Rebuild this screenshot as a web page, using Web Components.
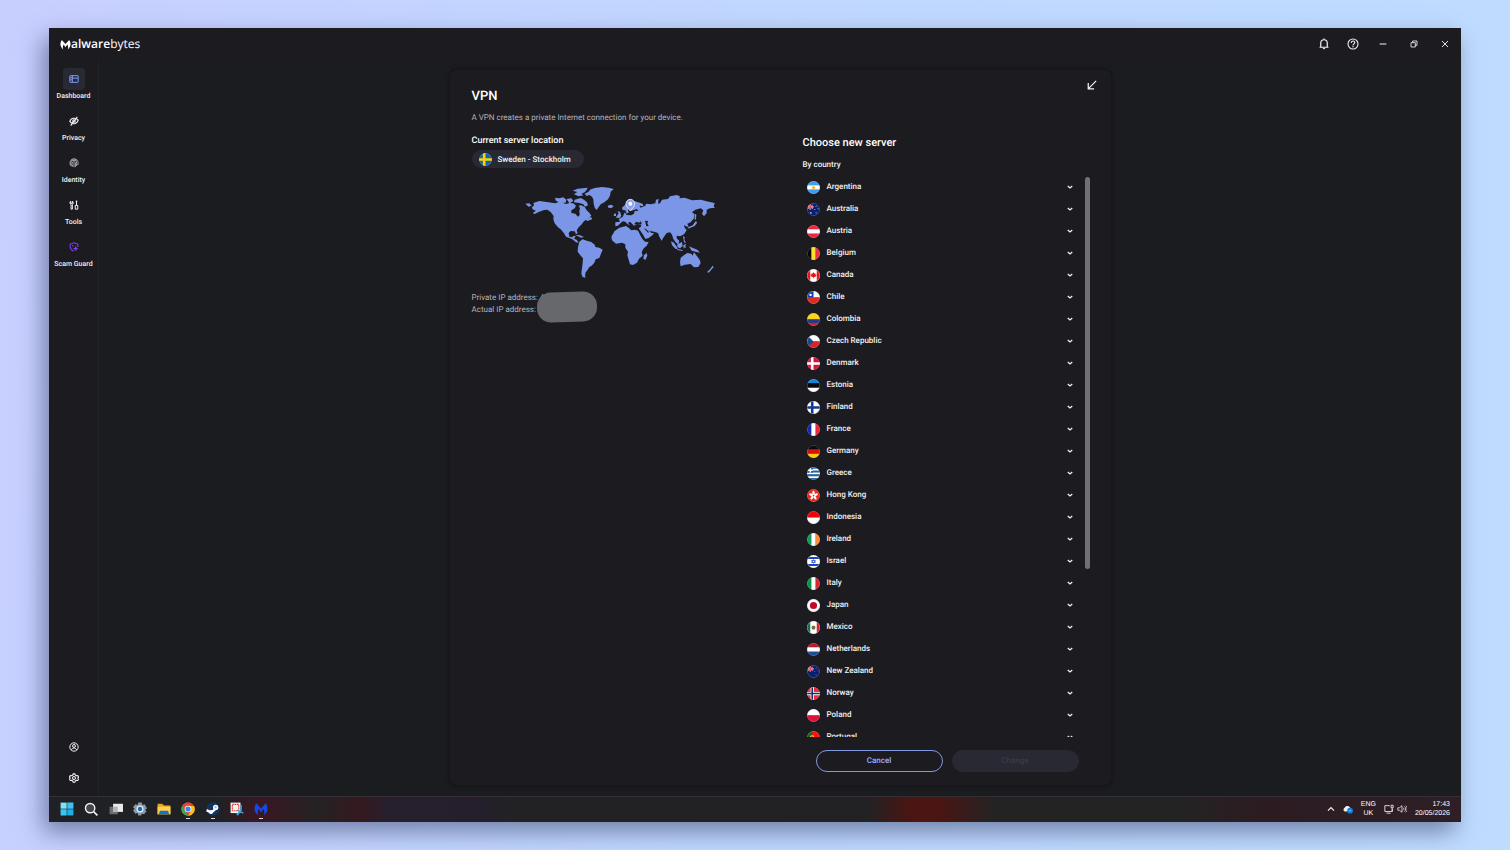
<!DOCTYPE html>
<html lang="en">
<head>
<meta charset="utf-8">
<title>Malwarebytes VPN</title>
<style>
  html, body { height: 100%; }
  body {
    margin: 0;
    box-sizing: border-box;
    padding: 28px 49px;
    background: linear-gradient(100deg, #c8cfff, #c0d8ff 50%, #bfdcff);
    font-family: Roboto, "Liberation Sans", sans-serif;
    text-rendering: geometricPrecision;
    color: #f2f2f4;
  }
</style>
</head>
<body>
<desktop-window>
  <title-bar slot="title"></title-bar>
  <side-nav slot="nav">
    <nav-item icon="dashboard" active>Dashboard</nav-item>
    <nav-item icon="privacy">Privacy</nav-item>
    <nav-item icon="identity">Identity</nav-item>
    <nav-item icon="tools">Tools</nav-item>
    <nav-item icon="scam">Scam Guard</nav-item>
    <nav-item slot="bottom" icon="account" label="Account"></nav-item>
    <nav-item slot="bottom" icon="settings" label="Settings"></nav-item>
  </side-nav>
  <vpn-card>
    <server-location slot="current"></server-location>
    <server-picker slot="picker"></server-picker>
  </vpn-card>
  <task-bar slot="taskbar"></task-bar>
</desktop-window>

<script>
const ICONS = {
  dashboard: '<g fill="none" stroke="#7f98f5" stroke-width="2.4"><rect x="2" y="4" width="20" height="16" rx="1"/><path d="M8 4v16M8 10h14M2 9h6M2 14h6"/></g>',
  privacy: '<g fill="none" stroke="#f2f2f4" stroke-width="2.6"><path d="M2 13C5 4 17 3 22 10c-3 10-14 12-20 3zM20 2L4 23"/><circle cx="12" cy="12" r="3"/></g>',
  identity: '<g fill="none" stroke="#b4b4b8" stroke-width="2.2"><path d="M4 18C0 9 5 2 12 2s12 6 9 15M6 20C2 11 7 5 12 5s8 5 6 14M9 21C6 14 7 9 12 9s4 6 3 13M12 12v10M5 5l14 0"/></g>',
  tools: '<g fill="none" stroke="#f2f2f4" stroke-width="2.4"><path d="M5 22V11C1 9 2 4 4 3v5h4V3c3 2 3 6 0 8v11zM18 2v10M16 3h4M15 13h6v9h-6z"/></g>',
  scam: '<path d="M12 2l9 3v7M12 2L3 5v7c0 5 4 8 8 10" fill="none" stroke="#7a3df0" stroke-width="2.6"/><path d="M16 9l2 5 5 2-5 2-2 5-2-5-5-2 5-2z" fill="#8a35ff"/><circle cx="9" cy="9" r="2" fill="#8a35ff"/>',
  account: '<g fill="none" stroke="#f2f2f4" stroke-width="2.4"><circle cx="12" cy="12" r="10"/><circle cx="12" cy="9.5" r="3.5"/><path d="M6 19c1-6 11-6 12 0"/></g>',
  settings: '<g fill="none" stroke="#f2f2f4" stroke-width="2.6"><path d="M10 2h4l1 3 3 1.500 3-.5 2 4-2 2 2 3-2 3-3-.5-3 1.500-1 3h-4l-1-3-3-1.500-3 .5-2-3 2-3-2-2 2-4 3 .5L9 5z"/><circle cx="12" cy="12" r="3.500"/></g>',
  bell: '<path d="M3 18.500h18M5.500 18v-8a6.500 6.500 0 0 1 13 0v8M12 1v3" fill="none" stroke="#f2f2f4" stroke-width="2.400"/><path d="M9 20h6l-3 3z" fill="#f2f2f4"/>',
  help: '<circle cx="12" cy="12" r="10" fill="none" stroke="#f2f2f4" stroke-width="2.200"/><path d="M8.500 10c0-5 7-5 7-1 0 3-3.500 2.500-3.500 6" fill="none" stroke="#f2f2f4" stroke-width="2.200"/><circle cx="12" cy="17.500" r="1.300" fill="#f2f2f4"/>',
  minimize: '<path d="M2 12h20" stroke="#f2f2f4" stroke-width="3"/>',
  restore: '<path d="M3 8h13v13H3zM8 8V3h13v13h-5" fill="none" stroke="#e0e0e2" stroke-width="2.800"/>',
  close: '<path d="M3 3l18 18M21 3L3 21" stroke="#f2f2f4" stroke-width="2.800"/>',
  collapse: '<path d="M22 2L4 20M3 7v14h14" fill="none" stroke="#f2f2f4" stroke-width="3"/>',
  chevron: '<path d="M3 8l9 8 9-8" fill="none" stroke="#f2f2f4" stroke-width="5"/>',
  up: '<path d="M3 17l9-9 9 9" fill="none" stroke="#f2f2f4" stroke-width="3.500"/>',
  brand: '<path d="M4 2l8 9 8-9c5 7 4 15-3 21 1-3 1-6 0-9l-1-2-4 6-4-6-1 2c-1 3-1 6 0 9C0 17-1 9 4 2z" fill="currentColor"/>',
  windows: '<g fill="#39c5f4"><path d="M1 1h10.500v10.500H1z" fill="#7be3fb"/><path d="M12.500 1H23v10.500H12.500zM1 12.500h10.500V23H1z"/><path d="M12.500 12.500H23V23H12.500z" fill="#20aee8"/></g>',
  search: '<circle cx="10.500" cy="10.500" r="8" fill="#44464a" stroke="#f2f2f4" stroke-width="2.400"/><path d="M16.500 16.500L23 23" stroke="#f2f2f4" stroke-width="2.800"/>',
  taskview: '<path d="M1 8h14v13H1z" fill="#6d6d70"/><path d="M7 3h17v14H7z" fill="#e9e9eb"/><path d="M7 8h8v9H7z" fill="#b4b4b7"/>',
  gear: '<path d="M9 1h6l1 4 4-1 4 7-3 2 2 3-4 5-4-1-1 3h-5l-1-4-4 1-4-6 3-2-3-3 4-5 4 1z" fill="#8a98a8"/><circle cx="12" cy="12" r="6" fill="#e6edf5"/><circle cx="12" cy="12" r="3.800" fill="#1768b8"/>',
  folder: '<path d="M1 3h8l3 3h11v15H1z" fill="#e9a51d"/><path d="M1 8h22v13H1z" fill="#ffd04f"/><path d="M5 15h14l2 6H3z" fill="#1672c4"/>',
  chrome: '<circle cx="12" cy="12" r="11.500" fill="#e94235"/><path d="M2 6.500l5.500 9L12 23.500A11.500 11.500 0 0 1 2 6.500z" fill="#34a853"/><path d="M12 7h10.500A11.500 11.500 0 0 1 12 23.500l5-8.500z" fill="#fbc116"/><circle cx="12" cy="12" r="5.700" fill="#fff"/><circle cx="12" cy="12" r="4.400" fill="#3d7fee"/>',
  steam: '<circle cx="12" cy="12" r="11.500" fill="#12325f"/><path d="M1 14l8 4 6-5 5-3" fill="none" stroke="#fff" stroke-width="4"/><circle cx="16.500" cy="9" r="4.500" fill="#fff"/><circle cx="16.500" cy="9" r="2" fill="#9db6d8"/><circle cx="8.500" cy="17" r="3.500" fill="#fff"/>',
  snip: '<path d="M1 1h17v18H1z" fill="#f7f4f4"/><path d="M4 4h11v11H4z" fill="none" stroke="#e0413a" stroke-width="2" stroke-dasharray="3 1"/><path d="M19 5v9l-6 7M12 14l11 5" fill="none" stroke="#3ba3dc" stroke-width="2.500"/><circle cx="13" cy="21" r="2" fill="#3ba3dc"/>',
  cloud: '<path d="M4 18a5 5 0 0 1 0-9c2-6 11-6 13 0 7 2 5 9 1 9z" fill="#eceef2"/><circle cx="17" cy="16" r="7" fill="#117ddd"/><path d="M14 16h6" stroke="#8cc9ff" stroke-width="2"/>',
  monitor: '<path d="M14 4H2v14h18v-6M6 22h10M17 3h5v6h-5zM19.500 9v9" fill="none" stroke="#e6e0e2" stroke-width="2.200"/>',
  speaker: '<path d="M2 9h4l6-5v16l-6-5H2zM15 9c2 2 2 4 0 6M18 6c4 4 4 8 0 12M21 4c5 5 5 11 0 16" fill="none" stroke="#e6e0e2" stroke-width="2"/>'
};

// Flags are drawn on a 20x20 square and clipped to a circle by <country-flag>.
const rows = (...c) => c.map((f, i) => `<path fill="${f}" d="M0 ${i * 20 / c.length}h20v${20 / c.length + .1}H0z"/>`).join('');
const cols = (...c) => c.map((f, i) => `<path fill="${f}" d="M${i * 20 / c.length} 0h${20 / c.length + .1}v20H${i * 20 / c.length}z"/>`).join('');
const cross = (bg, outer, inner) => `<path fill="${bg}" d="M0 0h20v20H0z"/><path d="M8 0v20M0 10h20" stroke="${outer}" stroke-width="${inner ? 5 : 4}"/>` +
  (inner ? `<path d="M8 0v20M0 10h20" stroke="${inner}" stroke-width="2.400"/>` : '');
const jack = '<path fill="#06206e" d="M0 0h20v20H0z"/><path d="M1 3l8 6M9 3L1 9" stroke="#e8d5e2" stroke-width="1.200"/><path d="M5 2v8M1 6h9" stroke="#f4d3dc" stroke-width="2.400"/><path d="M5 2v8M1 6h9" stroke="#e2334b" stroke-width="1.600"/>';

const FLAGS = {
  Sweden: cross('#1560ad', '#ffd400'),
  Argentina: rows('#3f9df0', '#fff', '#3f9df0') + '<circle cx="10" cy="10" r="2.500" fill="#f8b91c"/>',
  Australia: jack + '<g fill="#cfd5ec"><circle cx="6" cy="15" r="1.300"/><circle cx="14" cy="5" r=".8"/><circle cx="17" cy="9" r=".8"/><circle cx="12" cy="10" r=".8"/><circle cx="14" cy="15" r=".8"/></g>',
  Austria: rows('#f0263f', '#fff', '#f0263f'),
  Belgium: cols('#080808', '#ffdf2e', '#ee2f3f'),
  Canada: '<path fill="#fff" d="M0 0h20v20H0z"/><path fill="#e8161c" d="M0 0h5v20H0zM15 0h5v20h-5zM10 5l1.500 2 1.500-.5v2l2 .5-2 3-2.500.5v2h-1v-2L7 12l-2-3 2-.5v-2l1.500.5z"/>',
  Chile: '<path fill="#fff" d="M0 0h20v10H0z"/><path fill="#dd2b22" d="M0 10h20v10H0z"/><path fill="#0c3fb5" d="M0 0h10v10H0z"/><circle cx="5.500" cy="6" r="1.800" fill="#fff"/>',
  Colombia: '<path fill="#ffd21c" d="M0 0h20v10H0z"/><path fill="#173e9c" d="M0 10h20v5H0z"/><path fill="#d31f30" d="M0 15h20v5H0z"/>',
  'Czech Republic': rows('#fff', '#dc2127') + '<path fill="#17498c" d="M0 0l10 10L0 20z"/>',
  Denmark: cross('#d8113a', '#fff'),
  Estonia: rows('#1384d8', '#0a0a0c', '#fff'),
  Finland: cross('#fff', '#133a90'),
  France: cols('#1528a8', '#fff', '#ee2438'),
  Germany: rows('#0b0b0c', '#dd0d10', '#ffce0a'),
  Greece: rows('#1769bd', '#fff', '#1769bd', '#fff', '#1769bd', '#fff', '#1769bd') + '<path fill="#1769bd" d="M0 0h9v9H0z"/><path d="M5 0v9M0 5h9" stroke="#fff" stroke-width="2"/>',
  'Hong Kong': '<path fill="#e5291b" d="M0 0h20v20H0z"/><g fill="#fff">' + [0, 72, 144, 216, 288].map(a => `<ellipse cx="10" cy="6" rx="1.900" ry="3.200" transform="rotate(${a} 10 10)"/>`).join('') + '</g>',
  Indonesia: rows('#f4000c', '#fff'),
  Ireland: cols('#129b55', '#fff', '#ff8b3c'),
  Israel: '<path fill="#fff" d="M0 0h20v20H0z"/><path fill="#1c45bd" d="M0 3h20v3H0zM0 14h20v3H0z"/><path d="M10 7l3 4.500H7zM10 13L7 8.500h6z" fill="none" stroke="#1c45bd"/>',
  Italy: cols('#0c9246', '#fff', '#d82637'),
  Japan: '<path fill="#fff" d="M0 0h20v20H0z"/><circle cx="10" cy="10" r="5.500" fill="#c4052d"/>',
  Mexico: '<path fill="#fff" d="M0 0h20v20H0z"/><path fill="#0c7147" d="M0 0h5v20H0z"/><path fill="#d4202f" d="M15 0h5v20h-5z"/><circle cx="10" cy="10" r="3" fill="#8b6b38"/><path d="M8 12h4" stroke="#317f4b" stroke-width="1.500"/>',
  Netherlands: rows('#b51d2c', '#fff', '#1e4a94'),
  'New Zealand': jack + '<g fill="#a05590"><circle cx="14" cy="5" r=".9"/><circle cx="17" cy="9" r=".9"/><circle cx="12" cy="10" r=".9"/><circle cx="14" cy="15" r=".9"/></g>',
  Norway: cross('#ee2b38', '#fff', '#12306f'),
  Poland: rows('#fff', '#df1139'),
  Portugal: '<path fill="#ff1010" d="M0 0h20v20H0z"/><path fill="#0c6b1e" d="M0 0h8v20H0z"/><circle cx="8" cy="10" r="3.500" fill="#ffdf2e"/><circle cx="8" cy="10" r="2" fill="#ff1010"/>'
};

class BaseElement extends HTMLElement {
  constructor() {
    super();
    this.attachShadow({ mode: 'open' });
  }

  connectedCallback() {
    this.shadowRoot.innerHTML = this.render();
  }
}

customElements.define('svg-icon', class extends BaseElement {
  render() {
    const size = this.getAttribute('size') || 10;
    return `
      <style>
        :host { display: inline-flex; flex: none; }
        svg { display: block; }
      </style>
      <svg viewBox="0 0 24 24" width="${size}" height="${size}" aria-hidden="true">${ICONS[this.getAttribute('name')]}</svg>
    `;
  }
});

customElements.define('country-flag', class extends BaseElement {
  render() {
    return `
      <style>
        :host { display: block; flex: none; box-sizing: border-box; width: 13px; height: 13px; border-radius: 50%; overflow: hidden; }
        svg { display: block; width: 100%; height: 100%; }
      </style>
      <svg viewBox="0 0 20 20" aria-hidden="true">
        ${FLAGS[this.getAttribute('country')]}
        <circle cx="10" cy="10" r="9.500" fill="none" stroke="#c8c8d0" stroke-opacity=".5"/>
      </svg>
    `;
  }
});

customElements.define('desktop-window', class extends BaseElement {
  render() {
    return `
      <style>
        :host {
          display: grid;
          grid-template: 32px minmax(0, 1fr) 26px / 50px minmax(0, 1fr);
          height: 100%;
          background: #1b1c20;
          box-shadow: -6px 10px 22px rgba(50, 60, 100, .55);
        }
        ::slotted([slot="title"]), ::slotted([slot="taskbar"]) { grid-column: 1 / -1; }
        main { display: flex; justify-content: center; min-height: 0; padding: 9px 16px 10px; }
      </style>
      <slot name="title"></slot>
      <slot name="nav"></slot>
      <main><slot></slot></main>
      <slot name="taskbar"></slot>
    `;
  }
});

customElements.define('title-bar', class extends BaseElement {
  render() {
    const button = (name, label, size) =>
      `<button aria-label="${label}"><svg-icon name="${name}" size="${size}"></svg-icon></button>`;
    return `
      <style>
        :host { display: flex; justify-content: space-between; align-items: center; padding: 0 1px 0 11px; background: #1c1b20; }
        .brand { display: flex; align-items: center; font: 12px/16px "Open Sans", sans-serif; color: #fff; }
        .brand b { font-weight: 600; }
        .buttons, .actions { display: flex; }
        button { display: grid; place-items: center; width: 31px; height: 32px; padding: 0; border: 0; background: none; }
        .actions button { width: 29px; }
      </style>
      <div class="brand"><svg-icon name="brand" size="11" role="img" aria-label="M"></svg-icon><span><b>alware</b>bytes</span></div>
      <div class="buttons">
        <div class="actions">${button('bell', 'Notifications', 12)}${button('help', 'Help', 12)}</div>
        ${button('minimize', 'Minimize', 8)}${button('restore', 'Restore', 8)}${button('close', 'Close', 8)}
      </div>
    `;
  }
});

customElements.define('side-nav', class extends BaseElement {
  render() {
    return `
      <style>
        :host { display: block; background: #1c1b20; border-right: 1px solid #222226; }
        nav { display: flex; flex-direction: column; justify-content: space-between; height: 100%; box-sizing: border-box; padding: 8px 0 7px; }
        div { display: grid; gap: 8px; }
        .bottom { gap: 9px; }
      </style>
      <nav aria-label="Main">
        <div><slot></slot></div>
        <div class="bottom"><slot name="bottom"></slot></div>
      </nav>
    `;
  }
});

customElements.define('nav-item', class extends BaseElement {
  render() {
    const label = this.getAttribute('label');
    return `
      <style>
        :host { display: block; }
        a { display: grid; justify-items: center; color: #f2f2f4; text-decoration: none; font-size: 7px; font-weight: 500; line-height: 12px; white-space: nowrap; }
        .icon { display: grid; place-items: center; width: 22px; height: 22px; border-radius: 4px; }
        :host([active]) .icon { background: #282a33; }
      </style>
      <a href="#" ${label ? `aria-label="${label}"` : ''}>
        <span class="icon"><svg-icon name="${this.getAttribute('icon')}" size="10"></svg-icon></span>
        ${label ? '' : '<span><slot></slot></span>'}
      </a>
    `;
  }
});

customElements.define('vpn-card', class extends BaseElement {
  render() {
    return `
      <style>
        :host {
          display: flex;
          flex-direction: column;
          box-sizing: border-box;
          width: 100%;
          max-width: 663px;
          padding: 9px 21px 13px 22px;
          border: 1px solid #17171b;
          border-radius: 8px;
          background: #1c1b20;
          box-shadow: 0 0 4px rgba(0, 0, 0, .35);
        }
        header { display: flex; justify-content: space-between; align-items: start; }
        h1 { margin: 9px 0 0; font-size: 13px; font-weight: 500; line-height: 18px; color: #fff; }
        button { display: grid; padding: 0; border: 0; margin-right: -8px; background: none; width: 12px; height: 12px; place-items: center; }
        p { margin: 6px 0 0; font-size: 8px; line-height: 12px; color: #b4b4ba; }
        .columns { flex: 1; min-height: 0; display: grid; grid-template-columns: minmax(0, 1fr) 287px; gap: 42px; padding-top: 11px; }
      </style>
      <header>
        <h1>VPN</h1>
        <button aria-label="Collapse"><svg-icon name="collapse" size="10"></svg-icon></button>
      </header>
      <p>A VPN creates a private Internet connection for your device.</p>
      <div class="columns">
        <slot name="current"></slot>
        <slot name="picker"></slot>
      </div>
    `;
  }
});

customElements.define('world-map', class extends BaseElement {
  render() {
    return `
      <style>
        :host { display: block; width: 210px; }
        svg { display: block; width: 100%; }
      </style>
      <svg viewBox="0 0 630 330" role="img" aria-label="World map">
        <g fill="#7b96e6">
          <path d="M52 84l18-6 22 3 26 4 12-5 20 7 14-4 10 3 6 6-4 8-10 6v8l12 2 8 9 5-5-1-12 2-8-4-8 8-1 10 5 6 10 8 7 6 9-10 9 10 1-10 6-8-3-6 6-6 8-8 8-6 9 3 9-5 2-4-8-12-1-6 6 2 11 8 2 6-5 5 2-5 7 8 3 6 9-8-1-12-10-18-7-6-10-10-12-8-6-10-12-4-12 1-10-9-12-10-7-10 1-16 6-12 6-6-3 10-7-8-3-5-6 7-7z"/>
          <path d="M28 86l12-1 7 7-9 3zM118 68l12 2 12-3 9 7-2 9-17 1-14-8zM170 47l15-6 30-3-3 6-6 8-10 4 6 5-14 3-14-6 10-7zM176 74l18-5 10 5 9 8 3 9-9 4-5-7-12-4-16-2zM152 72l14-2 6 8-12 7zM216 128l9-2 4 7-9 2z"/>
          <path d="M206 56l12-6 4-6 14-5 22-3 20 2 15 4-9 8-2 12-6 11-10 8-12 7-6 8-6 9-6-7-3-12-1-13-4-8-8-5-8 3zM275 92l10-3 8 4-6 6-10-1z"/>
          <path d="M190 200l10-7 12 4 14 4 10 8 2 7 12 2 10 6-5 12-5 13-11 4-4 10-8 9-7 4-6 10-5 6-2 10 2 6-9-2-4-10 2-16 2-17 1-13-8-9-8-11 1-13zM177 179l15 2 12 5-9 2z"/>
          <path d="M296 168l14-10 20-5 8 5 8 8 10-2 11 3 4 10 8 14 8 9 11 1-6 11-10 9-5 11 3 10-11 9-6 12-12 7-9-2-4-14-4-14 2-10-8-12v-10l-10-5-18 3-12-10-2-11zM392 234l2 8-6 13-6-4 2-11z"/>
          <path d="M298 154v-12l14-2-4-8 12-6 6-14 6 8 14 1 8-5 2-8 12-1-6-5-10 4-8 1 4-11-6-4-6 12 2 9-6 3-4-10-8-1-2-7 12-12 16-10 16 4 18 6 2 8-12-2 4 6 14-6 2-6 14 2 14-3 2-11 8-2-2 14 6-1 6-11 18-2 6-8 20-4 10 4-2 6 16-2 22 8 26-2 24 6 18 4-3 10 4 4-15 2-10 4v10l-8 10-6-8 4-10-8-6-16 4-10 8 8 6-2 12-10 12-10 4 4 10-8-2-6-4 2 8 6 8-8 12-12 6-10-2v8l8 8-3 10-7-5-8-11-4-13-6-7-10 2-10 14-5 9-7-12-4-11-12-4-12-2-5-4 9 10h8l-4 6-12 9-10 3-6-11-14-21 6-4 2-6-12-2-10 4-6-6-6-6-6 4 6 7-8-4-6-7-8-1-8 7-7 6z"/>
          <path d="M301 126l7-11-4-6 8 1 4 12-4 6-11 1zM294 117l6-2v8h-7zM540 137l3 7-7 9-14 6-8 2 4-5 12-5zM537 116l4 3-1 14-4 2zM501 183l5 3-1 8 5 10-6-2zM465 199l9 4 12 18-7 1-11-11zM484 222l16 3-1 3-15-3zM484 208l14-7 2 12-8 7-8-4zM502 210l9-3-3 5 2 7-5-2-2 5zM519 214l10 4 15 6 8 9-10-2-15-4zM494 248l14-10 6-4 12 2 4 6 4-10 8 10 9 12 3 10-7 12-13 1-10-10-18 2-12 5-2-12zM590 272l3 4-7 8-8 9-5-2 9-8z"/>
        </g>
        <g fill="#1c1b20">
          <path d="M354 148l7-8 8 3 6-4 2 9-12 1zM387 137l9 1-2 7 4 8-7 1z"/>
          <path d="M366 166l4-1 15 27-3 2zM384 160l6 2 9 9-3 2z"/>
        </g>
        <path d="M343 108c-7-9-13-14-13-22a13 13 0 0 1 26 0c0 8-6 13-13 22z" fill="#88a2ef" stroke="#e6ebff" stroke-width="2.500"/>
        <circle cx="343" cy="86" r="6" fill="#fff"/>
      </svg>
    `;
  }
});

customElements.define('server-location', class extends BaseElement {
  render() {
    return `
      <style>
        :host { display: flex; flex-direction: column; align-items: flex-start; }
        h2 { margin: 0; font-size: 9px; font-weight: 500; line-height: 12px; color: #fff; }
        .chip { display: flex; align-items: center; gap: 6px; height: 18px; margin-top: 3px; padding: 0 13px 0 7px; border-radius: 9px; background: #282933; font-size: 8px; font-weight: 500; }
        world-map { margin: 7px 0 0 44px; }
        .addresses { position: relative; margin-top: 7px; font-size: 8px; line-height: 12px; color: #b4b4ba; }
        .mask { position: absolute; left: 65px; top: 0; width: 60px; height: 30px; border-radius: 14px; background: #66686b; transform: rotate(-2deg); }
      </style>
      <h2>Current server location</h2>
      <div class="chip"><country-flag country="Sweden"></country-flag>Sweden - Stockholm</div>
      <world-map></world-map>
      <div class="addresses">
        <div>Private IP address: 4</div>
        <div>Actual IP address: 1</div>
        <span class="mask"></span>
      </div>
    `;
  }
});

customElements.define('server-row', class extends BaseElement {
  render() {
    return `
      <style>
        :host { display: block; }
        button { display: flex; align-items: center; gap: 7px; width: 100%; height: 22px; padding: 0 7px 0 4px; border: 0; background: none; color: #f2f2f4; font: 500 8px/12px Roboto, sans-serif; text-align: left; text-rendering: inherit; }
        span { flex: 1; }
      </style>
      <button aria-expanded="false">
        <country-flag country="${this.textContent}"></country-flag>
        <span><slot></slot></span>
        <svg-icon name="chevron" size="6"></svg-icon>
      </button>
    `;
  }
});

customElements.define('server-picker', class extends BaseElement {
  render() {
    const countries = Object.keys(FLAGS).filter(name => name !== 'Sweden');
    return `
      <style>
        :host { display: flex; flex-direction: column; min-height: 0; }
        h2 { margin: 0; font-size: 11px; font-weight: 500; line-height: 16px; color: #fff; }
        h3 { margin: 8px 0 5px; font-size: 8px; font-weight: 500; line-height: 12px; }
        .list { flex: 1; min-height: 0; display: flex; }
        .servers { flex: 1; overflow-y: auto; scrollbar-width: none; }
        .rail { width: 5px; margin: 1px 0 0 5px; }
        .thumb { height: 70%; border-radius: 3px; background: #717174; }
        footer { display: grid; grid-template-columns: 1fr 1fr; gap: 9px; padding: 13px 11px 0 13px; }
        footer button { height: 22px; padding: 0; border: 1px solid #7f98e0; border-radius: 11px; background: none; color: #9db0ff; font: 500 8px/12px Roboto, sans-serif; text-rendering: inherit; }
        footer button:disabled { border-color: #282933; background: #282933; color: #3b3c46; }
      </style>
      <h2>Choose new server</h2>
      <h3>By country</h3>
      <div class="list">
        <div class="servers">${countries.map(name => `<server-row>${name}</server-row>`).join('')}</div>
        <div class="rail"><div class="thumb"></div></div>
      </div>
      <footer>
        <button>Cancel</button>
        <button disabled>Change</button>
      </footer>
    `;
  }
});

customElements.define('task-bar', class extends BaseElement {
  render() {
    const apps = ['windows', 'search', 'taskview', 'gear', 'folder', 'chrome', 'steam', 'snip', 'brand'];
    const running = ['chrome', 'steam', 'brand'];
    return `
      <style>
        :host {
          display: flex;
          justify-content: space-between;
          align-items: stretch;
          box-sizing: border-box;
          padding: 0 11px 2px 10px;
          border-top: 1px solid #323034;
          background: linear-gradient(90deg, #202124 12%, #3a1723 15%, #242224 19%, #35191f 22%, #271f2d 24%, #251f2d 30%, #222224 33%, #222224 58%, #4a1512 61%, #4a1512 63%, #242324 67%, #242324 80%, #2c1c22 86%, #2e1f27);
        }
        .apps { display: flex; justify-content: space-between; width: 210px; }
        button { display: grid; place-items: center; padding: 0; border: 0; background: none; color: #1648e8; width: 16px; position: relative; }
        .running::after { content: ""; position: absolute; bottom: 1px; left: 6px; width: 4px; height: 1px; background: #d8d8da; }
        .tray { display: flex; align-items: center; gap: 8px; font: 7px/9px "Liberation Sans", sans-serif; color: #fff; }
        .language { text-align: center; }
        .status { display: flex; gap: 3px; }
        .clock { text-align: right; }
      </style>
      <div class="apps">
        ${apps.map(name => `<button class="${running.includes(name) ? 'running' : ''}" aria-label="${name}"><svg-icon name="${name}" size="14"></svg-icon></button>`).join('')}
      </div>
      <div class="tray">
        <svg-icon name="up" size="8"></svg-icon>
        <svg-icon name="cloud" size="10"></svg-icon>
        <div class="language">ENG<br>UK</div>
        <div class="status"><svg-icon name="monitor" size="10"></svg-icon><svg-icon name="speaker" size="10"></svg-icon></div>
        <div class="clock">17:43<br>20/05/2026</div>
      </div>
    `;
  }
});
</script>
</body>
</html>
